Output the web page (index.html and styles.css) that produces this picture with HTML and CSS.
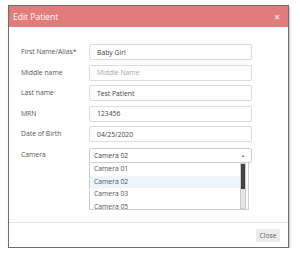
FILE: index.html
```html
<!DOCTYPE html>
<html lang="en">
<head>
  <meta charset="UTF-8">
  <title>Edit Patient</title>
  <link rel="stylesheet" href="styles.css">
</head>
<body>
  <div class="modal">
    <div class="modal-header">
      <span class="modal-title">Edit Patient</span>
      <span class="modal-close">&times;</span>
    </div>

    <div class="modal-body">
      <div class="form-row">
        <label>First Name/Alias*</label>
        <div class="field">Baby Girl</div>
      </div>
      <div class="form-row">
        <label>Middle name</label>
        <div class="field placeholder">Middle Name</div>
      </div>
      <div class="form-row">
        <label>Last name</label>
        <div class="field">Test Patient</div>
      </div>
      <div class="form-row">
        <label>MRN</label>
        <div class="field">123456</div>
      </div>
      <div class="form-row">
        <label>Date of Birth</label>
        <div class="field">04/25/2020</div>
      </div>
      <div class="form-row">
        <label>Camera</label>
        <div class="select-wrap">
          <div class="field select">
            <span>Camera 02</span>
            <span class="caret">&#9650;</span>
          </div>
          <!-- lista abierta -->
          <div class="dropdown">
            <div class="options">
              <div class="option">Camera 01</div>
              <div class="option active">Camera 02</div>
              <div class="option">Camera 03</div>
              <div class="option">Camera 05</div>
            </div>
            <div class="scrollbar"><div class="thumb"></div></div>
          </div>
        </div>
      </div>
    </div>

    <div class="modal-footer">
      <button class="btn-close">Close</button>
    </div>
  </div>
</body>
</html>
```

FILE: styles.css
```css
body {
  margin: 0;
  padding: 5px 0 0 8px;
  background: #fff;
  font-family: "Open Sans", "Liberation Sans", sans-serif;
  color: #555;
}

.modal {
  width: 279px;
  height: 241px;
  border: 1px solid #6e6e6e;
  background: #fff;
  box-shadow: 1px 1px 2px rgba(0, 0, 0, 0.25);
  display: flex;
  flex-direction: column;
}

.modal-header {
  height: 21px;
  background: #e27b7b;
  display: flex;
  align-items: center;
  justify-content: space-between;
  padding: 0 8px 0 4px;
}
.modal-title {
  color: #fff;
  font-size: 8.5px;
}
.modal-close {
  color: #fbe4e4;
  font-size: 10px;
  font-weight: bold;
}

.modal-body {
  flex: 1;
  padding: 17px 0 0 12px;
}

.form-row {
  display: flex;
  align-items: flex-start;
  margin-bottom: 4.5px;
}
.form-row label {
  width: 68px;
  font-size: 6.8px;
  color: #555;
  padding-top: 3px;
}

.field {
  box-sizing: border-box;
  width: 163px;
  height: 16px;
  border: 1px solid #dcdcdc;
  border-radius: 2px;
  font-size: 6.8px;
  color: #444;
  padding-left: 7px;
  display: flex;
  align-items: center;
}
.field.placeholder {
  color: #a8a8a8;
}

.select-wrap {
  position: relative;
  margin-top: 1px;
}
.field.select {
  height: 15px;
  padding: 0 6px 0 4px;
  justify-content: space-between;
  border-color: #cfcfcf;
}
.caret {
  font-size: 4px;
  color: #666;
}

.dropdown {
  position: absolute;
  top: 15px;
  left: 0;
  width: 160px;
  height: 47px;
  box-sizing: border-box;
  border: 1px solid #cfcfcf;
  border-top: none;
  background: #fff;
  display: flex;
  overflow: hidden;
}
.options {
  flex: 1;
  padding-top: 0.5px;
}
.option {
  height: 12.5px;
  line-height: 12.5px;
  padding-left: 4px;
  font-size: 6.8px;
  color: #555;
}
.option.active {
  background: #eef4fb;
}
.scrollbar {
  width: 4px;
  margin-right: 2px;
  background: #e6e6e6;
  border: 0.5px solid #ccc;
}
.thumb {
  height: 25px;
  background: #444;
}

.modal-footer {
  height: 24px;
  border-top: 1px solid #e6e6e6;
  display: flex;
  align-items: center;
  justify-content: flex-end;
  padding-right: 8px;
}
.btn-close {
  font-family: "Open Sans", "Liberation Sans", sans-serif;
  font-size: 6.8px;
  color: #666;
  background: #ececec;
  border: none;
  width: 24px;
  height: 13px;
  padding: 0;
  margin-top: 1px;
}
```
